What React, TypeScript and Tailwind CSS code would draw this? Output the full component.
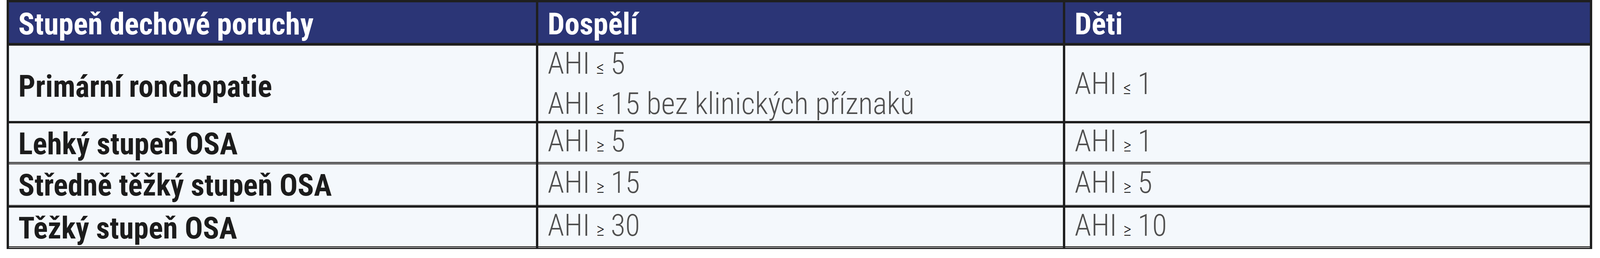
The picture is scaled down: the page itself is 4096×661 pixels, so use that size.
import React from 'react';

type Line = { pre: string; sign: string; rest: string };

interface RowData {
    label: string;
    adults: Line[];
    kids: Line[];
    height: string;
}

const ahi = (sign: string, rest: string): Line => ({ pre: 'AHI', sign, rest });

const rows: RowData[] = [
    { label: 'Primární ronchopatie', adults: [ahi('≤', '5'), ahi('≤', '15 bez klinických příznaků')], kids: [ahi('≤', '1')], height: 'h-[193px]' },
    { label: 'Lehký stupeň OSA', adults: [ahi('≥', '5')], kids: [ahi('≥', '1')], height: 'h-[99px]' },
    { label: 'Středně těžký stupeň OSA', adults: [ahi('≥', '15')], kids: [ahi('≥', '5')], height: 'h-[105px]' },
    { label: 'Těžký stupeň OSA', adults: [ahi('≥', '30')], kids: [ahi('≥', '10')], height: 'h-[99px]' },
];

const ValueCell: React.FC<{ lines: Line[] }> = ({ lines }) => (
    <div className="flex flex-col justify-center pl-6 border-l-[6px] border-[#1f1f1f] shadow-[inset_0_-2px_0_#b0b0b0]">
        {lines.map((l, i) => (
            <div key={i} className="leading-[93px] font-light text-[#505050] whitespace-nowrap">
                {l.pre}
                <span className="text-[46px] mx-[16px] text-[#1e1e1e]">{l.sign}</span>
                {l.rest}
            </div>
        ))}
    </div>
);

export default function App() {
    return (
        <div className="w-[4096px] h-[661px] bg-white pl-[17px]" style={{ fontFamily: '"Roboto Condensed", "Liberation Sans", sans-serif' }}>
            <div className="w-[4059px] border-[6px] border-b-[7px] border-[#1f1f1f] text-[77px] leading-none flex flex-col">
                <div className="grid grid-cols-3 box-content h-[104px] bg-[#2b3576] text-white font-bold border-b-[7px] border-[#1f1f1f]">
                    <div className="flex items-center pl-6 pt-2">Stupeň dechové poruchy</div>
                    <div className="flex items-center pl-6 pt-2 border-l-[6px] border-[#1f1f1f]">Dospělí</div>
                    <div className="flex items-center pl-6 pt-2 border-l-[6px] border-[#1f1f1f]">Děti</div>
                </div>
                {rows.map((r, i) => (
                    <div
                        key={r.label}
                        className={`grid grid-cols-3 bg-[#f4f8fc] box-content ${r.height} ${i < rows.length - 1 ? 'border-b-[6px] border-[#1f1f1f]' : ''}`}
                    >
                        <div className="flex items-center pl-6 pt-1 font-bold text-[#1c1c1c] shadow-[inset_0_-2px_0_#b0b0b0]">{r.label}</div>
                        <ValueCell lines={r.adults} />
                        <ValueCell lines={r.kids} />
                    </div>
                ))}
            </div>
        </div>
    );
}
